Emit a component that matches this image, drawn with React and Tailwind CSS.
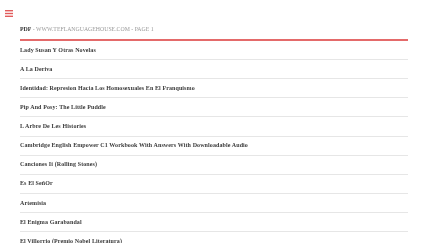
import React from "react";

const items = [
  "Lady Susan Y Otras Novelas",
  "A La Deriva",
  "Identidad: Represion Hacia Los Homosexuales En El Franquismo",
  "Pip And Posy: The Little Puddle",
  "L Arbre De Les Histories",
  "Cambridge English Empower C1 Workbook With Answers With Downloadable Audio",
  "Canciones Ii (Rolling Stones)",
  "Es El SeñOr",
  "Artemisia",
  "El Enigma Garabandal",
  "El Villorrio (Premio Nobel Literatura)",
];

export default function App() {
  return (
    <div className="w-[432px] h-[243px] bg-white overflow-hidden antialiased will-change-transform" style={{ fontFamily: '"Liberation Serif", serif' }}>
      <div className="pt-[10px] pl-[5px]">
        <svg width="8" height="7" viewBox="0 0 8 7" className="block">
          <rect x="0" y="0" width="8" height="1.4" fill="#e25c5c" />
          <rect x="0" y="2.8" width="8" height="1.4" fill="#e25c5c" />
          <rect x="0" y="5.6" width="8" height="1.4" fill="#e25c5c" />
        </svg>
      </div>
      <div className="ml-[20px] w-[388px]">
        <div className="mt-[3px] h-[21px] flex items-center border-b-2 border-[#e46a6a] text-[5.8px] text-[#999]">
          <span className="font-bold text-[#333]">PDF</span>
          <span>&nbsp;- WWW.TEFLANGUAGEHOUSE.COM - PAGE 1</span>
        </div>
        {items.map((t, i) => (
          <div key={t} className={"flex items-center border-b border-[#e6e6e6] text-[6px] font-bold tracking-[0.1px] text-[#3a3a3a] " + (i === 0 ? "h-[19px]" : "h-[19.15px]")}>
            {t}
          </div>
        ))}
      </div>
    </div>
  );
}
